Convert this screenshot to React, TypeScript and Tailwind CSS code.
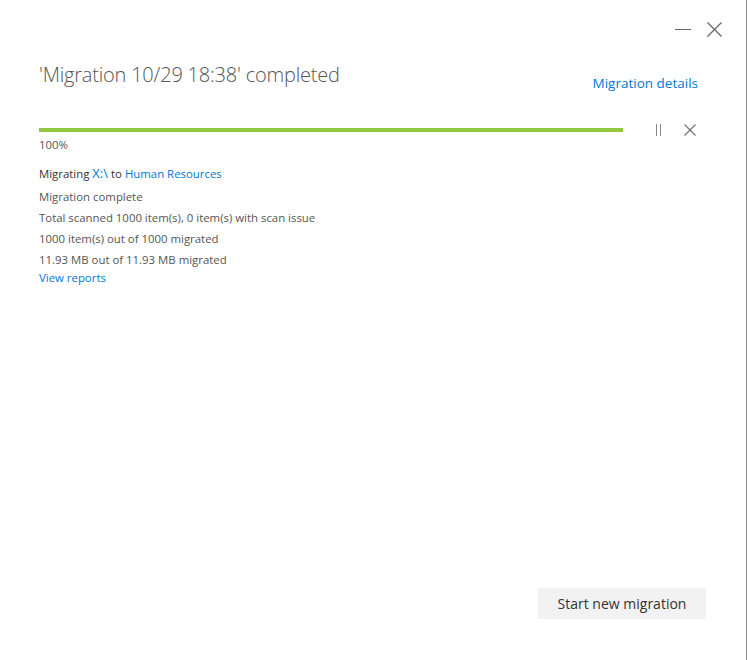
import React from "react";

const font = { fontFamily: '"Segoe UI", "Open Sans", "Noto Sans", sans-serif' };

function PauseIcon() {
  return (
    <svg width="12" height="14" viewBox="0 0 12 14" className="block">
      <line x1="4.5" y1="1" x2="4.5" y2="13" stroke="#8a8a8a" strokeWidth="1" />
      <line x1="8.5" y1="1" x2="8.5" y2="13" stroke="#8a8a8a" strokeWidth="1" />
    </svg>
  );
}

function CrossIcon({ size, color }: { size: number; color: string }) {
  return (
    <svg width={size} height={size} viewBox={`0 0 ${size} ${size}`} className="block">
      <line x1="0.5" y1="0.5" x2={size - 0.5} y2={size - 0.5} stroke={color} strokeWidth="1.2" />
      <line x1={size - 0.5} y1="0.5" x2="0.5" y2={size - 0.5} stroke={color} strokeWidth="1.2" />
    </svg>
  );
}

export default function App() {
  return (
    <div
      className="w-[747px] h-[660px] bg-white border-r border-[#8c8c8c] flex flex-col text-[#555]"
      style={font}
    >
      {/* window controls */}
      <div className="flex justify-end items-center gap-[16px] pt-[21px] pr-[24px] h-[37px]">
        <div className="w-[16px] h-[1.5px] bg-[#666] mt-[1px]" />
        <CrossIcon size={15} color="#666" />
      </div>

      {/* header */}
      <div className="flex items-end justify-between pl-[39px] pr-[48px] mt-[25px]">
        <h1 className="text-[20px] font-light leading-[26px] text-[#555] tracking-[-0.2px]">
          'Migration 10/29 18:38' completed
        </h1>
        <a className="text-[13.5px] leading-[18px] text-[#0078d7] mb-[-4px]">Migration details</a>
      </div>

      {/* progress */}
      <div className="flex items-center pl-[39px] pr-[50px] mt-[35px]">
        <div className="w-[585px] h-[4px] bg-[#92c83e]" />
        <div className="ml-[29px]">
          <PauseIcon />
        </div>
        <div className="ml-[20px]">
          <CrossIcon size={12} color="#777" />
        </div>
      </div>

      <div className="pl-[39px] text-[11.4px] leading-[16px]">
        <div className="mt-[0px]">100%</div>
        <div className="mt-[12px] text-[#333]">
          Migrating <span className="text-[#0078d7] text-[13px]">X:\</span> to{" "}
          <span className="text-[#0078d7]">Human Resources</span>
        </div>
        <div className="mt-[7px] space-y-[5px]">
          <div>Migration complete</div>
          <div>Total scanned 1000 item(s), 0 item(s) with scan issue</div>
          <div>1000 item(s) out of 1000 migrated</div>
          <div>11.93 MB out of 11.93 MB migrated</div>
        </div>
        <a className="block text-[#0078d7] mt-[2px]">View reports</a>
      </div>

      <div className="flex-1" />

      <div className="flex justify-end pr-[40px] pb-[41px]">
        <button className="w-[168px] h-[31px] bg-[#f2f2f2] text-[14px] text-[#333]">
          Start new migration
        </button>
      </div>
    </div>
  );
}
